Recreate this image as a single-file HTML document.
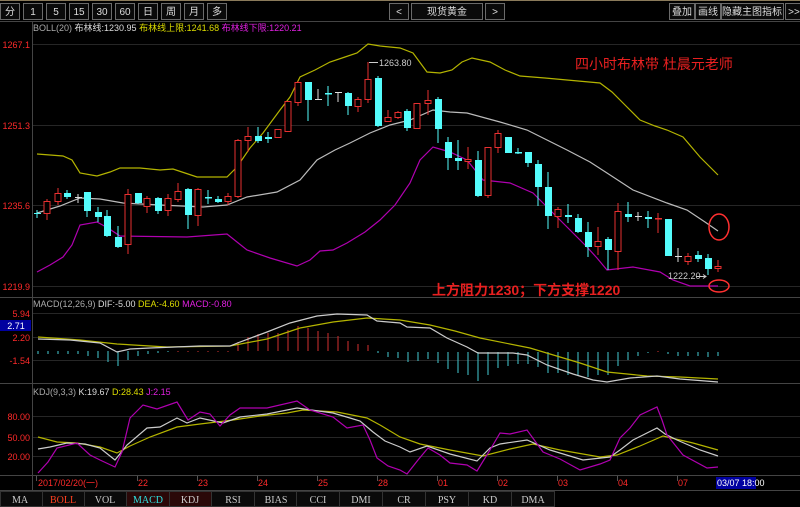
<!DOCTYPE html>
<html><head><meta charset="utf-8"><style>
body{margin:0;background:#000;width:800px;height:507px;overflow:hidden;font-family:"Liberation Sans","Noto Sans CJK SC",sans-serif}
svg{display:block}
</style></head><body>
<svg width="800" height="507" viewBox="0 0 800 507" xmlns="http://www.w3.org/2000/svg" font-family="Liberation Sans, Noto Sans CJK SC, sans-serif">
<rect width="800" height="507" fill="#000"/>
<!-- top toolbar -->
<line x1="0" y1="0.5" x2="800" y2="0.5" stroke="#8a7a5a"/>
<g fill="#0a0a0a" stroke="#6a6a6a" stroke-width="1">
<rect x="0.5" y="3.5" width="19" height="16"/><rect x="23.5" y="3.5" width="19" height="16"/><rect x="46.5" y="3.5" width="19" height="16"/><rect x="69.5" y="3.5" width="19" height="16"/><rect x="92.5" y="3.5" width="19" height="16"/><rect x="115.5" y="3.5" width="19" height="16"/><rect x="138.5" y="3.5" width="19" height="16"/><rect x="161.5" y="3.5" width="19" height="16"/><rect x="184.5" y="3.5" width="19" height="16"/><rect x="207.5" y="3.5" width="19" height="16"/>
<rect x="389.5" y="3.5" width="19" height="16"/><rect x="411.5" y="3.5" width="71" height="16"/><rect x="485.5" y="3.5" width="19" height="16"/>
<rect x="669.5" y="3.5" width="25" height="16"/><rect x="695.5" y="3.5" width="25" height="16"/><rect x="721.5" y="3.5" width="62" height="16"/><rect x="785.5" y="3.5" width="16" height="16"/>
</g>
<g fill="#ddd" font-size="10" text-anchor="middle">
<text x="10" y="15">分</text><text x="33" y="15">1</text><text x="56" y="15">5</text><text x="79" y="15">15</text><text x="102" y="15">30</text><text x="125" y="15">60</text><text x="148" y="15">日</text><text x="171" y="15">周</text><text x="194" y="15">月</text><text x="217" y="15">多</text>
<text x="399" y="15">&lt;</text><text x="447" y="15">现货黄金</text><text x="495" y="15">&gt;</text>
<text x="682" y="15">叠加</text><text x="708" y="15">画线</text><text x="752" y="15">隐藏主图指标</text><text x="794" y="15">&gt;&gt;</text>
</g>
<!-- frame lines -->
<g stroke="#444" stroke-width="1">
<line x1="0" y1="21.5" x2="800" y2="21.5"/>
<line x1="32.5" y1="21" x2="32.5" y2="490"/>
<line x1="0" y1="297.5" x2="800" y2="297.5"/>
<line x1="0" y1="383.5" x2="800" y2="383.5"/>
<line x1="0" y1="475.5" x2="800" y2="475.5"/>
<line x1="0" y1="490.5" x2="800" y2="490.5"/>
</g>
<g stroke="#262626" stroke-width="1">
<line x1="33" y1="44.5" x2="800" y2="44.5"/><line x1="33" y1="125.5" x2="800" y2="125.5"/><line x1="33" y1="205.5" x2="800" y2="205.5"/><line x1="33" y1="286.5" x2="800" y2="286.5"/>
<line x1="33" y1="313.5" x2="800" y2="313.5"/><line x1="33" y1="337.5" x2="800" y2="337.5"/><line x1="33" y1="360.5" x2="800" y2="360.5"/>
<line x1="33" y1="416.5" x2="800" y2="416.5"/><line x1="33" y1="437.5" x2="800" y2="437.5"/><line x1="33" y1="456.5" x2="800" y2="456.5"/>
</g>
<!-- axis labels -->
<g fill="#ff2a2a" font-size="9" text-anchor="end">
<text x="30" y="48">1267.1</text><text x="30" y="129">1251.3</text><text x="30" y="209">1235.6</text><text x="30" y="290">1219.9</text>
<text x="30" y="317">5.94</text><text x="30" y="341">2.20</text><text x="30" y="364">-1.54</text>
<text x="30" y="420">80.00</text><text x="30" y="441">50.00</text><text x="30" y="460">20.00</text>
</g>
<rect x="0" y="320" width="31" height="11" fill="#0000a0"/>
<text x="16" y="329" fill="#fff" font-size="9" text-anchor="middle">2.71</text>
<!-- legends -->
<text x="33" y="31" font-size="9"><tspan fill="#aaa">BOLL(20) </tspan><tspan fill="#ddd">布林线:1230.95 </tspan><tspan fill="#dddd00">布林线上限:1241.68 </tspan><tspan fill="#e020e0">布林线下限:1220.21</tspan></text>
<text x="33" y="307" font-size="9"><tspan fill="#aaa">MACD(12,26,9) </tspan><tspan fill="#ddd">DIF:-5.00 </tspan><tspan fill="#dddd00">DEA:-4.60 </tspan><tspan fill="#e020e0">MACD:-0.80</tspan></text>
<text x="33" y="395" font-size="9"><tspan fill="#aaa">KDJ(9,3,3) </tspan><tspan fill="#ddd">K:19.67 </tspan><tspan fill="#dddd00">D:28.43 </tspan><tspan fill="#e020e0">J:2.15</tspan></text>
<!-- bollinger -->
<g fill="none" stroke-width="1.2">
<polyline stroke="#b4b400" points="37,154 63,156 72,160 80,173 97,176 110,172 120,168 140,168 160,170 173,169 185,173 197,177 227,177 237,167 250,148 263,133 280,110 290,97 300,77 315,70 330,62 345,57 357,53 368,44 380,46 400,48 413,53 427,72 440,73 452,70 462,62 472,58 490,62 505,70 520,76 545,78 567,80 600,83 612,92 625,105 640,120 655,126 667,130 683,137 700,157 718,175"/>
<polyline stroke="#bbb" points="37,213 60,206 80,198 100,199 123,203 160,205 203,207 227,205 247,197 277,192 300,180 317,160 335,150 350,143 370,133 390,125 410,120 433,110 450,112 467,113 500,122 527,130 547,140 567,150 590,162 607,173 633,190 667,203 687,210 705,222 718,231"/>
<polyline stroke="#b000b0" points="37,272 50,265 63,257 72,245 80,225 97,222 108,228 120,236 187,237 227,234 237,242 247,250 270,258 297,266 310,260 320,251 333,250 347,243 365,232 380,220 395,205 410,183 420,160 433,147 450,152 467,160 475,170 483,180 510,183 533,193 545,205 560,220 575,235 587,247 597,258 607,270 633,267 660,272 673,280 690,286 718,286"/>
</g>
<!-- candles -->
<g stroke-width="1">
<line x1="37" y1="210" x2="37" y2="218" stroke="#54fcfc"/><rect x="34" y="213" width="7" height="1" fill="#54fcfc"/>
<line x1="47" y1="199" x2="47" y2="220" stroke="#e83030"/><rect x="44" y="201.5" width="6" height="12" fill="#000" stroke="#e83030"/>
<line x1="58" y1="188" x2="58" y2="205" stroke="#e83030"/><rect x="55" y="193.5" width="6" height="8" fill="#000" stroke="#e83030"/>
<line x1="67" y1="190" x2="67" y2="199" stroke="#54fcfc"/><rect x="64" y="193" width="7" height="4" fill="#54fcfc"/>
<line x1="78" y1="194" x2="78" y2="203" stroke="#ddd"/><rect x="75" y="197" width="7" height="1" fill="#ddd"/>
<line x1="87" y1="192" x2="87" y2="217" stroke="#54fcfc"/><rect x="84" y="192" width="7" height="19" fill="#54fcfc"/>
<line x1="98" y1="207" x2="98" y2="222" stroke="#54fcfc"/><rect x="95" y="212" width="7" height="5" fill="#54fcfc"/>
<line x1="107" y1="210" x2="107" y2="237" stroke="#54fcfc"/><rect x="104" y="216" width="7" height="20" fill="#54fcfc"/>
<line x1="118" y1="226" x2="118" y2="248" stroke="#54fcfc"/><rect x="115" y="237" width="7" height="10" fill="#54fcfc"/>
<line x1="128" y1="189" x2="128" y2="254" stroke="#e83030"/><rect x="125" y="194.5" width="6" height="50" fill="#000" stroke="#e83030"/>
<line x1="138" y1="193" x2="138" y2="204" stroke="#54fcfc"/><rect x="135" y="193" width="7" height="10" fill="#54fcfc"/>
<line x1="147" y1="196" x2="147" y2="213" stroke="#e83030"/><rect x="144" y="198.5" width="6" height="8" fill="#000" stroke="#e83030"/>
<line x1="158" y1="197" x2="158" y2="214" stroke="#54fcfc"/><rect x="155" y="198" width="7" height="13" fill="#54fcfc"/>
<line x1="168" y1="194" x2="168" y2="216" stroke="#e83030"/><rect x="165" y="198.5" width="6" height="12" fill="#000" stroke="#e83030"/>
<line x1="178" y1="183" x2="178" y2="202" stroke="#e83030"/><rect x="175" y="191.5" width="6" height="8" fill="#000" stroke="#e83030"/>
<line x1="188" y1="188" x2="188" y2="229" stroke="#54fcfc"/><rect x="185" y="189" width="7" height="26" fill="#54fcfc"/>
<line x1="198" y1="188" x2="198" y2="226" stroke="#e83030"/><rect x="195" y="189.5" width="6" height="26" fill="#000" stroke="#e83030"/>
<line x1="208" y1="190" x2="208" y2="204" stroke="#54fcfc"/><rect x="205" y="197" width="7" height="1.5" fill="#54fcfc"/>
<line x1="218" y1="196" x2="218" y2="203" stroke="#54fcfc"/><rect x="215" y="199" width="7" height="3" fill="#54fcfc"/>
<line x1="228" y1="193" x2="228" y2="205" stroke="#e83030"/><rect x="225" y="196.5" width="6" height="5" fill="#000" stroke="#e83030"/>
<line x1="238" y1="139" x2="238" y2="198" stroke="#e83030"/><rect x="235" y="140.5" width="6" height="56" fill="#000" stroke="#e83030"/>
<line x1="248" y1="127" x2="248" y2="152" stroke="#e83030"/><rect x="245" y="136.5" width="6" height="4" fill="#000" stroke="#e83030"/>
<line x1="258" y1="127" x2="258" y2="143" stroke="#54fcfc"/><rect x="255" y="136" width="7" height="5" fill="#54fcfc"/>
<line x1="268" y1="132" x2="268" y2="143" stroke="#54fcfc"/><rect x="265" y="137" width="7" height="2" fill="#54fcfc"/>
<line x1="278" y1="129" x2="278" y2="138" stroke="#e83030"/><rect x="275" y="129.5" width="6" height="8" fill="#000" stroke="#e83030"/>
<rect x="285" y="101.5" width="6" height="30" fill="#000" stroke="#e83030"/>
<line x1="298" y1="81" x2="298" y2="106" stroke="#e83030"/><rect x="295" y="82.5" width="6" height="20" fill="#000" stroke="#e83030"/>
<line x1="308" y1="82" x2="308" y2="121" stroke="#54fcfc"/><rect x="305" y="82" width="7" height="18" fill="#54fcfc"/>
<line x1="318" y1="89" x2="318" y2="99" stroke="#ddd"/><rect x="315" y="99" width="7" height="1" fill="#ddd"/>
<line x1="328" y1="86" x2="328" y2="106" stroke="#54fcfc"/><rect x="325" y="93" width="7" height="1.5" fill="#54fcfc"/>
<line x1="338" y1="92" x2="338" y2="102" stroke="#ddd"/><rect x="335" y="92" width="7" height="1" fill="#ddd"/>
<line x1="348" y1="92" x2="348" y2="115" stroke="#54fcfc"/><rect x="345" y="93" width="7" height="13" fill="#54fcfc"/>
<line x1="358" y1="97" x2="358" y2="112" stroke="#e83030"/><rect x="355" y="99.5" width="6" height="7" fill="#000" stroke="#e83030"/>
<line x1="368" y1="62" x2="368" y2="103" stroke="#e83030"/><rect x="365" y="79.5" width="6" height="20" fill="#000" stroke="#e83030"/>
<line x1="378" y1="76" x2="378" y2="127" stroke="#54fcfc"/><rect x="375" y="78" width="7" height="48" fill="#54fcfc"/>
<line x1="388" y1="110" x2="388" y2="122" stroke="#e83030"/><rect x="385" y="117.5" width="6" height="4" fill="#000" stroke="#e83030"/>
<line x1="398" y1="111" x2="398" y2="119" stroke="#e83030"/><rect x="395" y="112.5" width="6" height="5" fill="#000" stroke="#e83030"/>
<line x1="407" y1="109" x2="407" y2="131" stroke="#54fcfc"/><rect x="404" y="111" width="7" height="17" fill="#54fcfc"/>
<rect x="414" y="103.5" width="6" height="25" fill="#000" stroke="#e83030"/>
<line x1="428" y1="90" x2="428" y2="115" stroke="#e83030"/><rect x="425" y="100.5" width="6" height="3" fill="#000" stroke="#e83030"/>
<line x1="438" y1="97" x2="438" y2="143" stroke="#54fcfc"/><rect x="435" y="99" width="7" height="30" fill="#54fcfc"/>
<line x1="448" y1="137" x2="448" y2="170" stroke="#54fcfc"/><rect x="445" y="142" width="7" height="16" fill="#54fcfc"/>
<line x1="458" y1="140" x2="458" y2="170" stroke="#54fcfc"/><rect x="455" y="158" width="7" height="3" fill="#54fcfc"/>
<line x1="468" y1="147" x2="468" y2="169" stroke="#e83030"/><rect x="465" y="159.5" width="6" height="2" fill="#000" stroke="#e83030"/>
<line x1="478" y1="151" x2="478" y2="197" stroke="#54fcfc"/><rect x="475" y="160" width="7" height="36" fill="#54fcfc"/>
<line x1="488" y1="147" x2="488" y2="198" stroke="#e83030"/><rect x="485" y="147.5" width="6" height="48" fill="#000" stroke="#e83030"/>
<line x1="498" y1="130" x2="498" y2="153" stroke="#e83030"/><rect x="495" y="133.5" width="6" height="14" fill="#000" stroke="#e83030"/>
<rect x="505" y="137" width="7" height="16" fill="#54fcfc"/>
<line x1="518" y1="148" x2="518" y2="154" stroke="#54fcfc"/><rect x="515" y="152" width="7" height="1.5" fill="#54fcfc"/>
<line x1="528" y1="152" x2="528" y2="167" stroke="#54fcfc"/><rect x="525" y="152" width="7" height="11" fill="#54fcfc"/>
<line x1="538" y1="160" x2="538" y2="206" stroke="#54fcfc"/><rect x="535" y="164" width="7" height="23" fill="#54fcfc"/>
<line x1="548" y1="172" x2="548" y2="229" stroke="#54fcfc"/><rect x="545" y="187" width="7" height="29" fill="#54fcfc"/>
<line x1="558" y1="207" x2="558" y2="228" stroke="#e83030"/><rect x="555" y="209.5" width="6" height="7" fill="#000" stroke="#e83030"/>
<line x1="568" y1="204" x2="568" y2="223" stroke="#54fcfc"/><rect x="565" y="215" width="7" height="2" fill="#54fcfc"/>
<line x1="578" y1="214" x2="578" y2="233" stroke="#54fcfc"/><rect x="575" y="218" width="7" height="14" fill="#54fcfc"/>
<line x1="588" y1="222" x2="588" y2="257" stroke="#54fcfc"/><rect x="585" y="232" width="7" height="15" fill="#54fcfc"/>
<line x1="598" y1="227" x2="598" y2="255" stroke="#e83030"/><rect x="595" y="241.5" width="6" height="5" fill="#000" stroke="#e83030"/>
<line x1="608" y1="237" x2="608" y2="270" stroke="#54fcfc"/><rect x="605" y="239" width="7" height="11" fill="#54fcfc"/>
<line x1="618" y1="203" x2="618" y2="270" stroke="#e83030"/><rect x="615" y="211.5" width="6" height="40" fill="#000" stroke="#e83030"/>
<line x1="628" y1="202" x2="628" y2="222" stroke="#54fcfc"/><rect x="625" y="214" width="7" height="3" fill="#54fcfc"/>
<line x1="638" y1="212" x2="638" y2="221" stroke="#ddd"/><rect x="635" y="216" width="7" height="1" fill="#ddd"/>
<line x1="648" y1="211" x2="648" y2="228" stroke="#54fcfc"/><rect x="645" y="217" width="7" height="2" fill="#54fcfc"/>
<line x1="658" y1="213" x2="658" y2="233" stroke="#e83030"/><rect x="655" y="218" width="7" height="1.5" fill="#e83030"/>
<rect x="665" y="219" width="7" height="37" fill="#54fcfc"/>
<line x1="678" y1="248" x2="678" y2="262" stroke="#ddd"/><rect x="675" y="256" width="7" height="1" fill="#ddd"/>
<line x1="688" y1="253" x2="688" y2="265" stroke="#e83030"/><rect x="685" y="256.5" width="6" height="5" fill="#000" stroke="#e83030"/>
<line x1="698" y1="251" x2="698" y2="262" stroke="#54fcfc"/><rect x="695" y="255" width="7" height="4" fill="#54fcfc"/>
<line x1="708" y1="254" x2="708" y2="275" stroke="#54fcfc"/><rect x="705" y="258" width="7" height="11" fill="#54fcfc"/>
<line x1="718" y1="260" x2="718" y2="272" stroke="#e83030"/><rect x="715" y="266.5" width="6" height="2" fill="#000" stroke="#e83030"/>
</g>
<!-- price labels -->
<line x1="369" y1="62.5" x2="378" y2="62.5" stroke="#ccc"/>
<text x="379" y="66" fill="#ccc" font-size="9">1263.80</text>
<text x="668" y="279" fill="#ccc" font-size="9">1222.20</text>
<line x1="696" y1="276.5" x2="706" y2="276.5" stroke="#ccc"/><path d="M703,274.5 L706,276.5 L703,278.5" fill="none" stroke="#ccc"/>
<!-- annotations -->
<text x="575" y="69" fill="#e82020" font-size="14">四小时布林带 杜晨元老师</text>
<text x="432" y="295" fill="#e82020" font-size="14" font-weight="bold">上方阻力1230；下方支撑1220</text>
<ellipse cx="719" cy="227" rx="10" ry="13" fill="none" stroke="#ff3030" stroke-width="1.5"/>
<ellipse cx="719" cy="286" rx="10" ry="6" fill="none" stroke="#ff3030" stroke-width="1.5"/>
<!-- MACD bars -->
<g stroke-width="1.2">
<g stroke="#3aaab0">
<line x1="38" y1="351" x2="38" y2="354"/><line x1="48" y1="351" x2="48" y2="354"/><line x1="58" y1="351" x2="58" y2="354"/><line x1="68" y1="351" x2="68" y2="354"/><line x1="78" y1="351" x2="78" y2="354"/><line x1="88" y1="351" x2="88" y2="356"/><line x1="98" y1="351" x2="98" y2="358"/><line x1="108" y1="351" x2="108" y2="362"/><line x1="118" y1="351" x2="118" y2="366"/><line x1="128" y1="351" x2="128" y2="360"/><line x1="138" y1="351" x2="138" y2="356"/><line x1="148" y1="351" x2="148" y2="354"/><line x1="158" y1="351" x2="158" y2="353"/><line x1="168" y1="351" x2="168" y2="352"/>
<line x1="388" y1="352" x2="388" y2="357"/><line x1="398" y1="352" x2="398" y2="358"/><line x1="408" y1="352" x2="408" y2="362"/><line x1="418" y1="352" x2="418" y2="361"/><line x1="428" y1="352" x2="428" y2="359"/><line x1="438" y1="352" x2="438" y2="363"/><line x1="448" y1="352" x2="448" y2="369"/><line x1="458" y1="352" x2="458" y2="373"/><line x1="468" y1="352" x2="468" y2="375"/><line x1="478" y1="352" x2="478" y2="381"/><line x1="488" y1="352" x2="488" y2="375"/><line x1="498" y1="352" x2="498" y2="368"/><line x1="508" y1="352" x2="508" y2="366"/><line x1="518" y1="352" x2="518" y2="364"/><line x1="528" y1="352" x2="528" y2="364"/><line x1="538" y1="352" x2="538" y2="367"/><line x1="548" y1="352" x2="548" y2="373"/><line x1="558" y1="352" x2="558" y2="373"/><line x1="568" y1="352" x2="568" y2="375"/><line x1="578" y1="352" x2="578" y2="376"/><line x1="588" y1="352" x2="588" y2="377"/><line x1="598" y1="352" x2="598" y2="375"/><line x1="608" y1="352" x2="608" y2="375"/><line x1="618" y1="352" x2="618" y2="366"/><line x1="628" y1="352" x2="628" y2="360"/><line x1="638" y1="352" x2="638" y2="356"/><line x1="648" y1="352" x2="648" y2="353"/><line x1="668" y1="352" x2="668" y2="354"/><line x1="678" y1="352" x2="678" y2="356"/><line x1="688" y1="352" x2="688" y2="356"/><line x1="698" y1="352" x2="698" y2="356"/><line x1="708" y1="352" x2="708" y2="357"/><line x1="718" y1="352" x2="718" y2="356"/>
<line x1="378" y1="351" x2="378" y2="353"/>
</g>
<g stroke="#b02828">
<line x1="178" y1="351" x2="178" y2="352"/><line x1="188" y1="351" x2="188" y2="352"/><line x1="198" y1="351" x2="198" y2="352"/><line x1="208" y1="351" x2="208" y2="352"/><line x1="218" y1="351" x2="218" y2="352"/><line x1="228" y1="351" x2="228" y2="352"/>
<line x1="238" y1="351" x2="238" y2="342"/><line x1="248" y1="351" x2="248" y2="337"/><line x1="258" y1="351" x2="258" y2="334"/><line x1="268" y1="351" x2="268" y2="333"/><line x1="278" y1="351" x2="278" y2="333"/><line x1="288" y1="351" x2="288" y2="330"/><line x1="298" y1="351" x2="298" y2="326"/><line x1="308" y1="351" x2="308" y2="328"/><line x1="318" y1="351" x2="318" y2="331"/><line x1="328" y1="351" x2="328" y2="333"/><line x1="338" y1="351" x2="338" y2="336"/><line x1="348" y1="351" x2="348" y2="341"/><line x1="358" y1="351" x2="358" y2="344"/><line x1="368" y1="351" x2="368" y2="345"/>
<line x1="658" y1="351" x2="658" y2="352"/>
</g>
</g>
<g fill="none" stroke-width="1.2">
<polyline stroke="#b4b400" points="38,337 80,340 117,344 167,347 230,346 267,339 300,328 333,322 367,318 400,320 430,325 455,331 480,338 530,348 580,363 607,372 647,376 680,377 718,379"/>
<polyline stroke="#ccc" points="38,339 70,340 100,343 117,352 130,349 150,348 200,346 230,346 240,342 267,332 290,323 317,316 337,314 367,315 377,321 400,323 407,327 430,328 447,338 467,347 478,353 513,353 527,355 547,365 573,374 593,380 607,382 630,378 657,376 680,379 718,382"/>
</g>
<!-- KDJ -->
<g fill="none" stroke-width="1.2">
<polyline stroke="#b4b400" points="38,437 57,442 77,443 100,447 117,453 130,446 150,437 177,427 200,424 233,420 260,416 287,413 303,410 337,412 367,418 380,425 400,437 420,444 450,450 483,456 510,449 533,444 560,450 600,457 617,455 640,446 663,436 693,443 718,450"/>
<polyline stroke="#ccc" points="38,449 50,447 67,443 85,444 100,448 115,460 127,445 147,428 160,427 177,418 187,423 200,418 223,423 240,417 267,414 297,408 333,413 350,418 360,421 373,432 385,441 400,447 410,452 427,446 450,454 477,461 490,448 500,444 527,440 550,450 583,460 610,457 620,450 633,440 657,428 665,434 677,440 700,450 718,456"/>
<polyline stroke="#b000b0" points="38,473 48,462 57,448 77,443 90,455 100,460 115,467 122,452 130,418 143,405 157,409 177,402 188,420 200,412 210,414 220,426 230,415 240,408 267,408 297,401 310,410 333,417 347,428 363,425 370,440 377,458 388,466 400,470 407,474 418,460 428,448 440,455 450,463 467,465 477,471 490,450 500,433 510,434 527,430 543,452 560,459 580,470 600,464 610,460 620,438 630,428 640,415 657,407 662,420 667,435 683,455 707,468 718,467"/>
</g>
<!-- date axis -->
<g stroke="#555">
<line x1="36.5" y1="476" x2="36.5" y2="481"/><line x1="137.5" y1="476" x2="137.5" y2="481"/><line x1="197.5" y1="476" x2="197.5" y2="481"/><line x1="257.5" y1="476" x2="257.5" y2="481"/><line x1="317.5" y1="476" x2="317.5" y2="481"/><line x1="377.5" y1="476" x2="377.5" y2="481"/><line x1="437.5" y1="476" x2="437.5" y2="481"/><line x1="497.5" y1="476" x2="497.5" y2="481"/><line x1="557.5" y1="476" x2="557.5" y2="481"/><line x1="617.5" y1="476" x2="617.5" y2="481"/><line x1="677.5" y1="476" x2="677.5" y2="481"/>
</g>
<g fill="#ff2a2a" font-size="9">
<text x="38" y="486">2017/02/20(一)</text><text x="138" y="486">22</text><text x="198" y="486">23</text><text x="258" y="486">24</text><text x="318" y="486">25</text><text x="378" y="486">28</text><text x="438" y="486">01</text><text x="498" y="486">02</text><text x="558" y="486">03</text><text x="618" y="486">04</text><text x="678" y="486">07</text>
</g>
<rect x="716" y="477" width="40" height="12" fill="#0000a0"/>
<text x="717" y="486" fill="#fff" font-size="9">03/07 18:00</text>
<!-- bottom tabs -->
<g stroke="#333" fill="#0a0a0a">
<rect x="0.5" y="491.5" width="42" height="15"/><rect x="42.5" y="491.5" width="42" height="15"/><rect x="84.5" y="491.5" width="42" height="15"/><rect x="126.5" y="491.5" width="43" height="15" fill="#2a0808"/><rect x="169.5" y="491.5" width="42" height="15" fill="#2a0808"/><rect x="211.5" y="491.5" width="43" height="15"/><rect x="254.5" y="491.5" width="42" height="15"/><rect x="296.5" y="491.5" width="43" height="15"/><rect x="339.5" y="491.5" width="43" height="15"/><rect x="382.5" y="491.5" width="43" height="15"/><rect x="425.5" y="491.5" width="43" height="15"/><rect x="468.5" y="491.5" width="43" height="15"/><rect x="511.5" y="491.5" width="43" height="15"/>
</g>
<g font-family="Liberation Serif, serif" font-size="10" text-anchor="middle" fill="#ccc">
<text x="20" y="503">MA</text><text x="63" y="503" fill="#ff4020">BOLL</text><text x="105" y="503">VOL</text><text x="148" y="503" fill="#30e0e0">MACD</text><text x="190" y="503">KDJ</text><text x="233" y="503">RSI</text><text x="276" y="503">BIAS</text><text x="318" y="503">CCI</text><text x="361" y="503">DMI</text><text x="404" y="503">CR</text><text x="447" y="503">PSY</text><text x="490" y="503">KD</text><text x="533" y="503">DMA</text>
</g>
</svg>
</body></html>
